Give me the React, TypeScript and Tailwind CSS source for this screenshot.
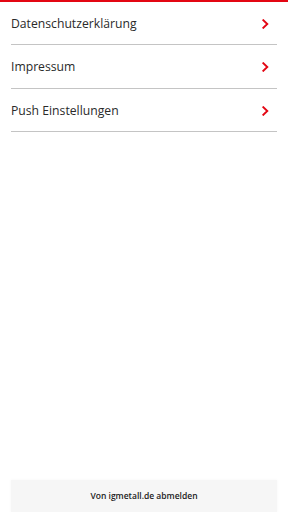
const items = ['Datenschutzerklärung', 'Impressum', 'Push Einstellungen'];

function Chevron() {
  return (
    <svg width="7" height="10" viewBox="0 0 7 10" fill="none">
      <path d="M1.3 1.2 L5.3 5 L1.3 8.8" stroke="#e30613" strokeWidth="1.9" strokeLinecap="square" />
    </svg>
  );
}

export default function App() {
  return (
    <div className="w-[288px] h-[512px] bg-white flex flex-col" style={{ fontFamily: '"Open Sans", "Noto Sans", sans-serif' }}>
      <div className="h-[2px] bg-[#e30613]" />
      <div className="flex-1 px-[11px]">
        {items.map((label) => (
          <div key={label} className="h-[43.3px] flex items-center justify-between border-b border-[#c4c4c4] pt-[2px] pr-[8px]">
            <span className="text-[12.2px] text-[#2a2a2a]">{label}</span>
            <Chevron />
          </div>
        ))}
      </div>
      <div className="px-[11px]">
        <div className="h-[32px] bg-[#f6f6f6] flex items-center justify-center shadow-[0_0_3px_rgba(0,0,0,0.04)]">
          <span className="text-[8.5px] font-semibold text-[#222]">Von igmetall.de abmelden</span>
        </div>
      </div>
    </div>
  );
}
